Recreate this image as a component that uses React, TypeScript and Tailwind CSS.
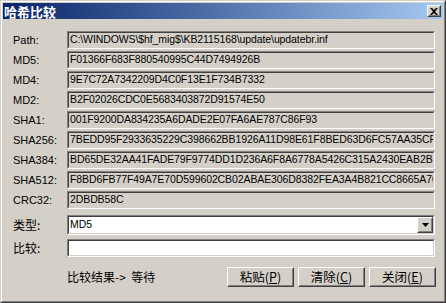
import type { ReactNode } from 'react'

const rows: [string, string][] = [
  ['Path:', 'C:\\WINDOWS\\$hf_mig$\\KB2115168\\update\\updatebr.inf'],
  ['MD5:', 'F01366F683F880540995C44D7494926B'],
  ['MD4:', '9E7C72A7342209D4C0F13E1F734B7332'],
  ['MD2:', 'B2F02026CDC0E5683403872D91574E50'],
  ['SHA1:', '001F9200DA834235A6DADE2E07FA6AE787C86F93'],
  ['SHA256:', '7BEDD95F2933635229C398662BB1926A11D98E61F8BED63D6FC57AA35CF'],
  ['SHA384:', 'BD65DE32AA41FADE79F9774DD1D236A6F8A6778A5426C315A2430EAB2B'],
  ['SHA512:', 'F8BD6FB77F49A7E70D599602CB02ABAE306D8382FEA3A4B821CC8665A70'],
  ['CRC32:', '2DBDB58C'],
]

// classic 2px sunken edit box
function Sunken({ children, white }: { children?: ReactNode; white?: boolean }) {
  return (
    <div className="w-[368px] h-full border border-t-[#808080] border-l-[#808080] border-r-white border-b-white">
      <div
        className={`h-full overflow-hidden whitespace-nowrap flex items-center pl-[1px] text-[10.5px] tracking-[-0.1px] border border-t-[#404040] border-l-[#404040] border-r-[#d4d0c8] border-b-[#d4d0c8] ${white ? 'bg-white' : 'bg-[#d4d0c8]'}`}
      >
        {children}
      </div>
    </div>
  )
}

function Raised({ children, className }: { children?: ReactNode; className: string }) {
  return (
    <div className={`border border-t-white border-l-white border-r-[#404040] border-b-[#404040] ${className}`}>
      <div className="w-full h-full flex items-center justify-center border border-t-[#d4d0c8] border-l-[#d4d0c8] border-r-[#808080] border-b-[#808080] bg-[#d4d0c8]">
        {children}
      </div>
    </div>
  )
}

function Btn({ label, k }: { label: string; k: string }) {
  return (
    <Raised className="w-[67px] h-[20px]">
      <span className="text-[12.5px] leading-none text-black">
        {label}(<span className="underline">{k}</span>)
      </span>
    </Raised>
  )
}

export default function App() {
  return (
    <div className="w-[446px] h-[303px] border border-t-[#d4d0c8] border-l-[#d4d0c8] border-r-[#404040] border-b-[#404040] font-['Liberation_Sans','Noto_Sans_CJK_SC',sans-serif] text-[11px] text-black select-none">
      <div className="h-full border border-t-white border-l-white border-r-[#808080] border-b-[#808080] bg-[#d4d0c8] p-px flex flex-col">
        {/* title bar */}
        <div className="h-[16px] flex items-center justify-between pl-[1px] pr-[2px] bg-gradient-to-r from-[#0a246a] to-[#a6caf0]">
          <span className="text-white font-bold text-[13px] leading-none font-['Noto_Sans_CJK_SC',sans-serif]">哈希比较</span>
          <Raised className="w-[14px] h-[12px]">
            <svg width="8" height="7" viewBox="0 0 8 7">
              <path d="M0 0h2l2 2 2-2h2L5 3.5 8 7H6L4 5 2 7H0l3-3.5z" fill="#000" />
            </svg>
          </Raised>
        </div>

        {/* hash rows */}
        <div className="mt-[12px] flex flex-col gap-[2px]">
          {rows.map(([label, value]) => (
            <div key={label} className="h-[18px] flex items-center">
              <span className="pl-[10px] w-[64px]">{label}</span>
              <Sunken>{value}</Sunken>
            </div>
          ))}
        </div>

        {/* type select */}
        <div className="mt-[6px] h-[20px] flex items-center">
          <span className="pl-[10px] w-[64px] text-[12px] font-['Noto_Sans_CJK_SC',sans-serif]">类型:</span>
          <div className="w-[368px] h-full border border-t-[#808080] border-l-[#808080] border-r-white border-b-white">
            <div className="h-full flex items-center justify-between pl-[1px] text-[10.5px] border border-t-[#404040] border-l-[#404040] border-r-[#d4d0c8] border-b-[#d4d0c8] bg-white">
              <span>MD5</span>
              <Raised className="w-[16px] h-[16px]">
                <svg width="7" height="4" viewBox="0 0 7 4">
                  <path d="M0 0h7L3.5 4z" fill="#000" />
                </svg>
              </Raised>
            </div>
          </div>
        </div>

        {/* compare input */}
        <div className="mt-[4px] h-[18px] flex items-center">
          <span className="pl-[10px] w-[64px] text-[12px] font-['Noto_Sans_CJK_SC',sans-serif]">比较:</span>
          <Sunken white />
        </div>

        {/* result + buttons */}
        <div className="mt-[10px] h-[20px] flex items-center">
          <div className="w-[64px]" />
          <span className="text-[12px] font-['Noto_Sans_CJK_SC',sans-serif] whitespace-pre">比较结果-&gt;  等待</span>
          <div className="ml-auto mr-[7px] flex gap-[4px] font-['Noto_Sans_CJK_SC',sans-serif]">
            <Btn label="粘贴" k="P" />
            <Btn label="清除" k="C" />
            <Btn label="关闭" k="E" />
          </div>
        </div>
      </div>
    </div>
  )
}
